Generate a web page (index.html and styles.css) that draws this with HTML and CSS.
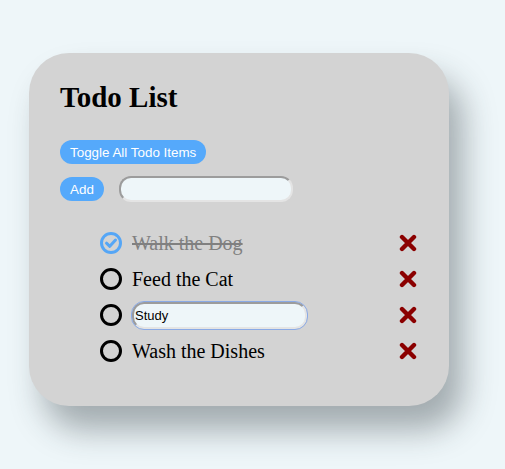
FILE: index.html
```html
<!DOCTYPE html>
<html>
<head>
<meta charset="utf-8">
<link rel="stylesheet" href="styles.css">
</head>
<body>
<div class="card">
  <h1 class="title">Todo List</h1>
  <div class="controls">
    <button class="btn">Toggle All Todo Items</button>
    <div class="add-row">
      <button class="btn">Add</button>
      <input class="field" type="text">
    </div>
  </div>
  <ul class="list">
    <li class="item done">
      <svg class="circle" width="22" height="22" viewBox="0 0 22 22"><circle cx="11" cy="11" r="9.5" fill="none" stroke="#55a6f6" stroke-width="3"/><path d="M6.5 11.2 L9.8 14.3 L15.5 8" fill="none" stroke="#55a6f6" stroke-width="3" stroke-linecap="round" stroke-linejoin="round"/></svg>
      <span class="label">Walk the Dog</span>
      <svg class="del" width="18" height="18" viewBox="0 0 18 18"><path d="M3 3 L15 15 M15 3 L3 15" stroke="#8b0000" stroke-width="4.4" stroke-linecap="round"/></svg>
    </li>
    <li class="item">
      <svg class="circle" width="22" height="22" viewBox="0 0 22 22"><circle cx="11" cy="11" r="9.5" fill="none" stroke="#000" stroke-width="3"/></svg>
      <span class="label">Feed the Cat</span>
      <svg class="del" width="18" height="18" viewBox="0 0 18 18"><path d="M3 3 L15 15 M15 3 L3 15" stroke="#8b0000" stroke-width="4.4" stroke-linecap="round"/></svg>
    </li>
    <li class="item">
      <svg class="circle" width="22" height="22" viewBox="0 0 22 22"><circle cx="11" cy="11" r="9.5" fill="none" stroke="#000" stroke-width="3"/></svg>
      <input class="field edit" type="text" value="Study">
      <svg class="del" width="18" height="18" viewBox="0 0 18 18"><path d="M3 3 L15 15 M15 3 L3 15" stroke="#8b0000" stroke-width="4.4" stroke-linecap="round"/></svg>
    </li>
    <li class="item">
      <svg class="circle" width="22" height="22" viewBox="0 0 22 22"><circle cx="11" cy="11" r="9.5" fill="none" stroke="#000" stroke-width="3"/></svg>
      <span class="label">Wash the Dishes</span>
      <svg class="del" width="18" height="18" viewBox="0 0 18 18"><path d="M3 3 L15 15 M15 3 L3 15" stroke="#8b0000" stroke-width="4.4" stroke-linecap="round"/></svg>
    </li>
  </ul>
</div>
</body>
</html>
```
FILE: styles.css
```css
html, body {
  margin: 0;
  padding: 0;
}
body {
  background: #eef6f9;
  font-family: "Liberation Serif", "Times New Roman", serif;
  min-height: 469px;
  padding-top: 53px;
  box-sizing: border-box;
}
.card {
  margin-left: 29px;
  width: 420px;
  height: 353px;
  box-sizing: border-box;
  background: #d3d3d3;
  border-radius: 40px;
  padding: 28px 30px 0 31px;
  box-shadow: 14px 24px 32px rgba(40, 50, 55, 0.38);
}
.title {
  margin: 0;
  font-size: 29px;
  font-weight: bold;
  color: #000;
  line-height: 33px;
}
.controls {
  margin-top: 26px;
  display: flex;
  flex-direction: column;
  align-items: flex-start;
  gap: 12px;
}
.btn {
  height: 24px;
  padding: 0 10px;
  border: none;
  border-radius: 12px;
  background: #55a9fb;
  color: #fff;
  font-family: "Liberation Sans", Arial, sans-serif;
  font-size: 13.4px;
  margin: 0;
}
.add-row {
  display: flex;
  align-items: center;
  gap: 15px;
}
.field {
  box-sizing: border-box;
  width: 174px;
  height: 26px;
  margin: 0;
  border-style: solid;
  border-width: 2px;
  border-color: #9c9c9c #e4e4e4 #e4e4e4 #9c9c9c;
  border-radius: 12px;
  background: #eef6f9;
  font-family: "Liberation Sans", Arial, sans-serif;
  font-size: 13px;
  padding: 0 1px;
  color: #000;
}
.list {
  list-style: none;
  margin: 23px 0 0 0;
  padding: 0 0 0 40px;
}
.item {
  height: 36px;
  display: flex;
  align-items: center;
}
.circle {
  flex: none;
}
.label {
  margin-left: 10px;
  font-size: 20px;
  line-height: 24px;
  color: #000;
  flex: 1;
}
.done .label {
  color: #808080;
  text-decoration: line-through;
}
.edit {
  margin-left: 10px;
  width: 175px;
  height: 27px;
  outline: 1px solid #8aaae6;
  outline-offset: 0;
}
.item .edit + .del {
  margin-left: auto;
}
.del {
  flex: none;
  margin-right: 2px;
}
```
